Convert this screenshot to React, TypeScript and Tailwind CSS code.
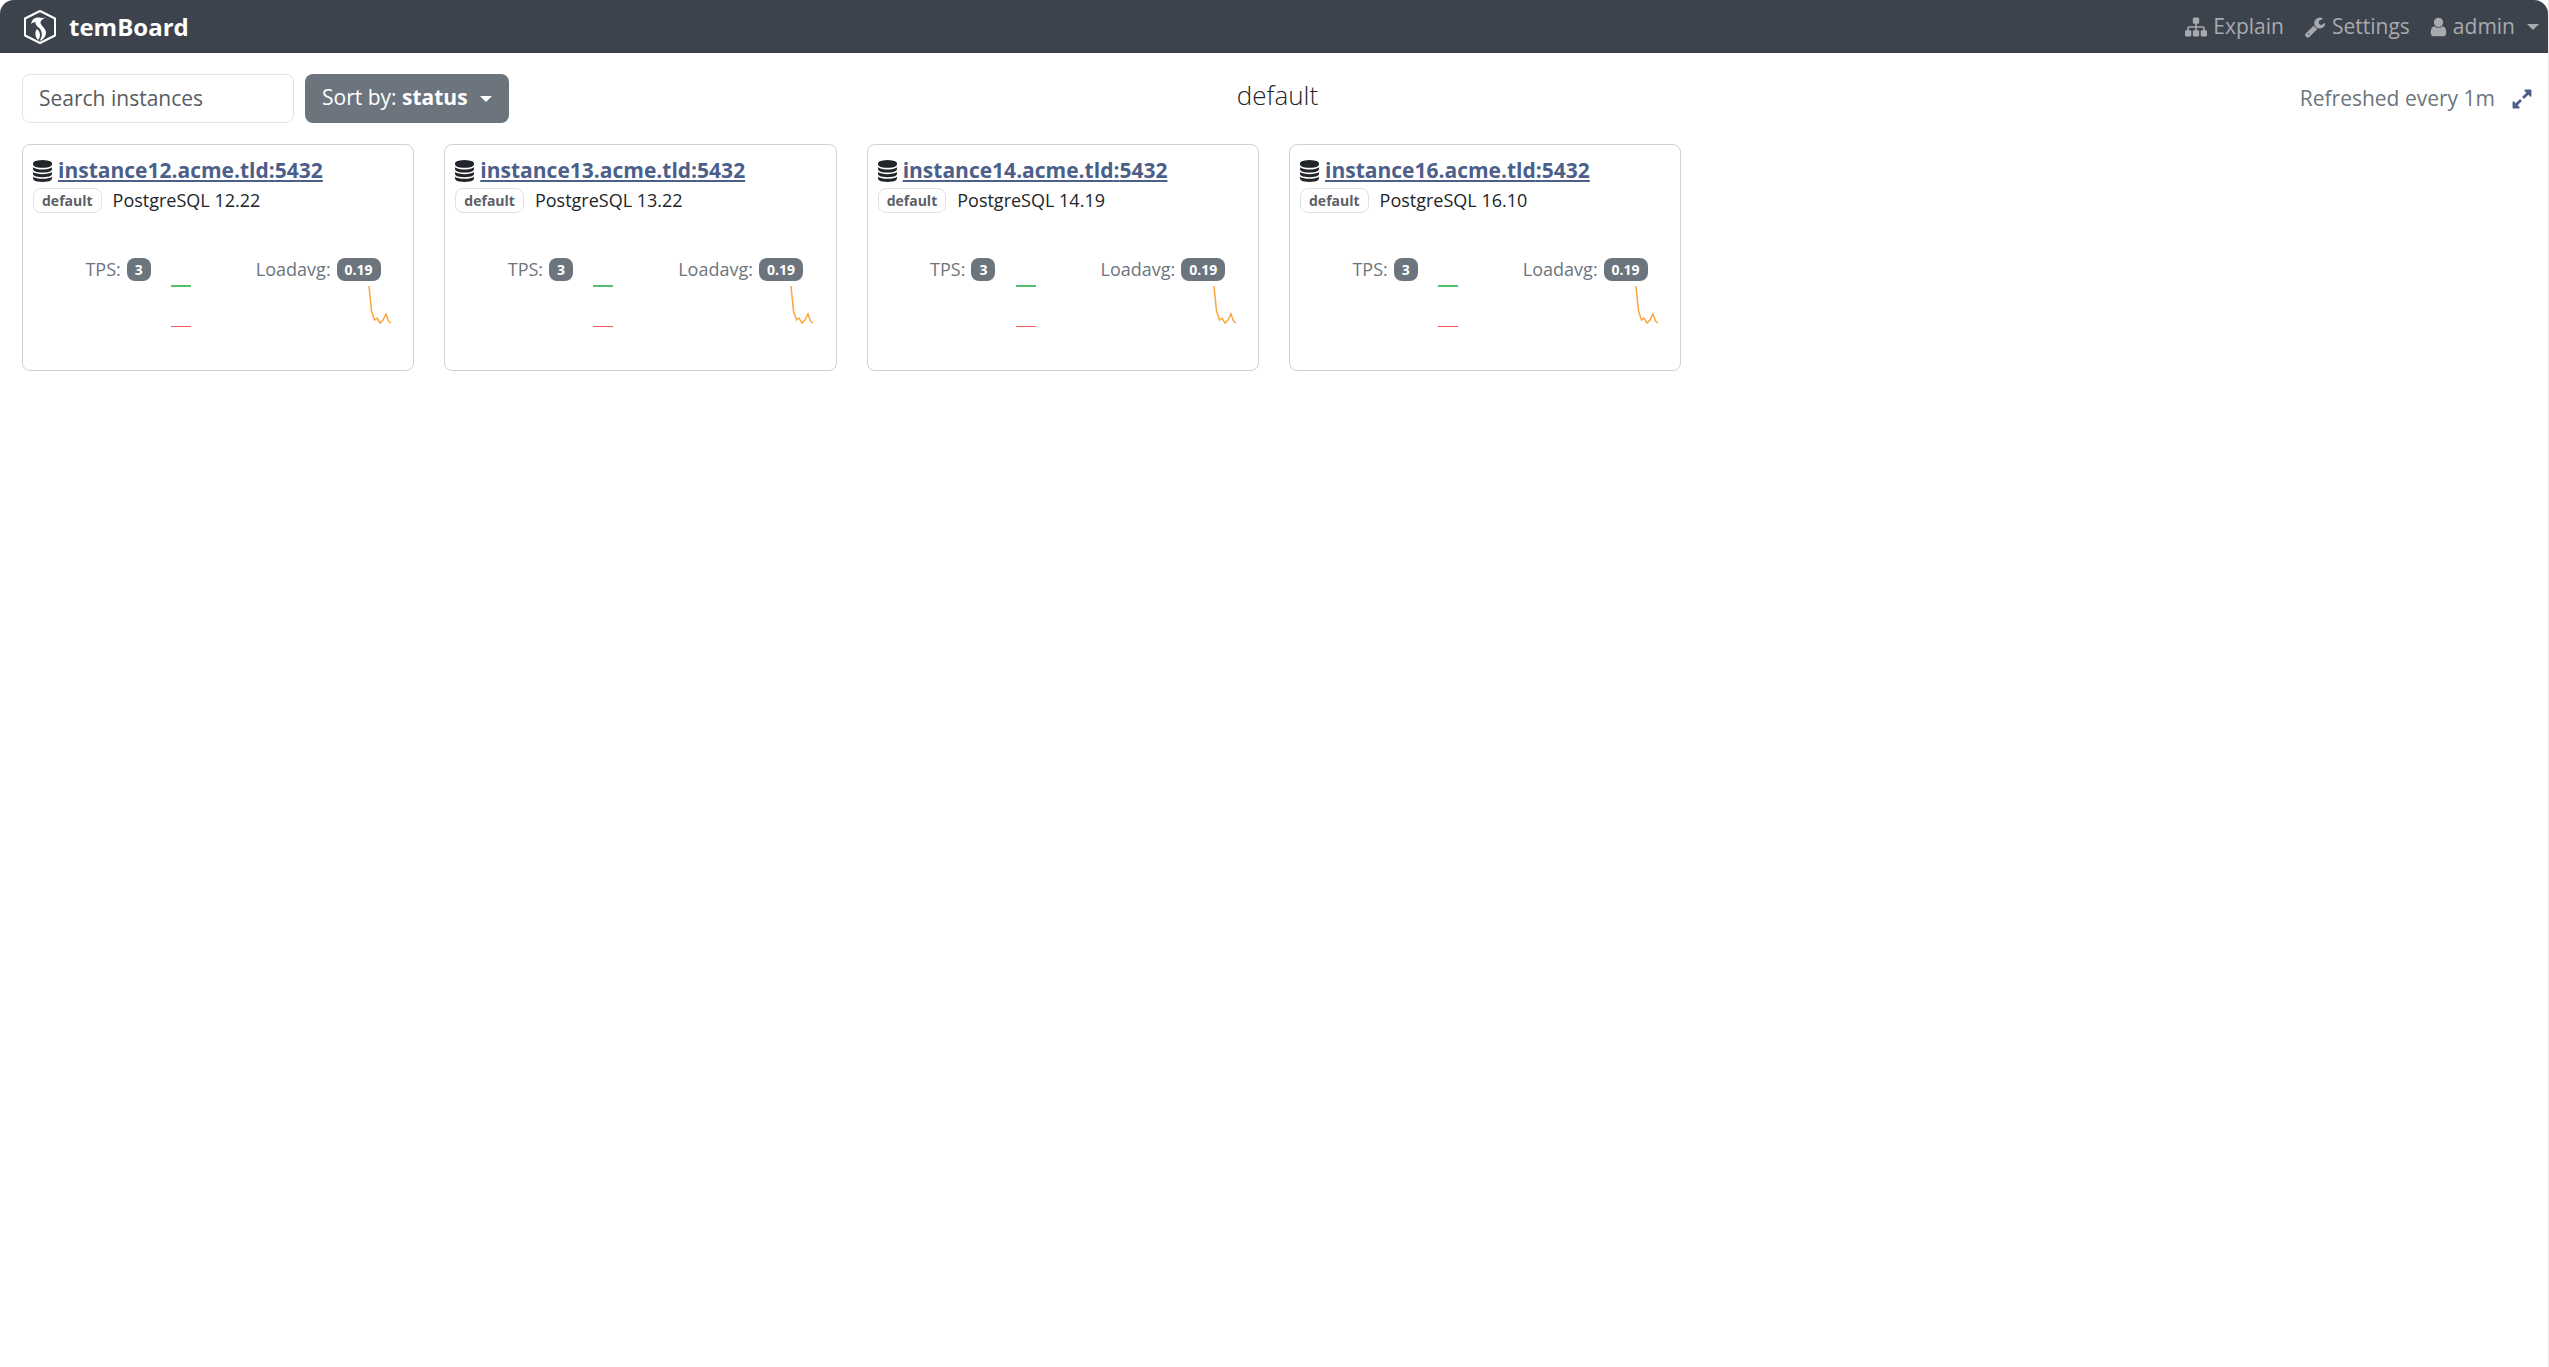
import { useState } from "react";

type Instance = {
  host: string;
  port: number;
  group: string;
  version: string;
  tps: number;
  loadavg: number;
};

const INSTANCES: Instance[] = [
  { host: "instance12.acme.tld", port: 5432, group: "default", version: "12.22", tps: 3, loadavg: 0.19 },
  { host: "instance13.acme.tld", port: 5432, group: "default", version: "13.22", tps: 3, loadavg: 0.19 },
  { host: "instance14.acme.tld", port: 5432, group: "default", version: "14.19", tps: 3, loadavg: 0.19 },
  { host: "instance16.acme.tld", port: 5432, group: "default", version: "16.10", tps: 3, loadavg: 0.19 },
];

const ICONS = {
  sitemap:
    "M1792 1248v320q0 40-28 68t-68 28h-320q-40 0-68-28t-28-68v-320q0-40 28-68t68-28h96v-192h-512v192h96q40 0 68 28t28 68v320q0 40-28 68t-68 28h-320q-40 0-68-28t-28-68v-320q0-40 28-68t68-28h96v-192h-512v192h96q40 0 68 28t28 68v320q0 40-28 68t-68 28h-320q-40 0-68-28t-28-68v-320q0-40 28-68t68-28h96v-192q0-52 38-90t90-38h512v-192h-96q-40 0-68-28t-28-68v-320q0-40 28-68t68-28h320q40 0 68 28t28 68v320q0 40-28 68t-68 28h-96v192h512q52 0 90 38t38 90v192h96q40 0 68 28t28 68z",
  wrench:
    "M448 1472q0-26-19-45t-45-19-45 19-19 45 19 45 45 19 45-19 19-45zm644-420l-682 682q-37 37-90 37-52 0-91-37l-106-108q-38-36-38-90 0-53 38-91l681-681q39 98 114.5 173.5t173.5 114.5zm634-435q0 39-23 106-47 134-164.5 217.5t-258.5 83.5q-185 0-316.5-131.5t-131.5-316.5 131.5-316.5 316.5-131.5q58 0 121.5 16.5t107.5 46.5q16 11 16 28t-16 28l-293 169v224l193 107q5-3 79-48.5t135.5-81 70.5-35.5q15 0 23.5 10t8.5 25z",
  user: "M1536 1399q0 109-62.5 187t-150.5 78h-854q-88 0-150.5-78t-62.5-187q0-85 8.5-160.5t31.5-152 58.5-131 94-89 134.5-34.5q131 128 313 128t313-128q76 0 134.5 34.5t94 89 58.5 131 31.5 152 8.5 160.5zm-256-887q0 159-112.5 271.5t-271.5 112.5-271.5-112.5-112.5-271.5 112.5-271.5 271.5-112.5 271.5 112.5 112.5 271.5z",
  database:
    "M896 768q237 0 443-43t325-127v170q0 69-103 128t-280 93.5-385 34.5-385-34.5-280-93.5-103-128v-170q119 84 325 127t443 43zm0 768q237 0 443-43t325-127v170q0 69-103 128t-280 93.5-385 34.5-385-34.5-280-93.5-103-128v-170q119 84 325 127t443 43zm0-384q237 0 443-43t325-127v170q0 69-103 128t-280 93.5-385 34.5-385-34.5-280-93.5-103-128v-170q119 84 325 127t443 43zm0-1152q208 0 385 34.5t280 93.5 103 128v128q0 69-103 128t-280 93.5-385 34.5-385-34.5-280-93.5-103-128v-128q0-69 103-128t280-93.5 385-34.5z",
  expand:
    "M883 1056q0 13-10 23l-332 332 144 144q19 19 19 45t-19 45-45 19h-448q-26 0-45-19t-19-45v-448q0-26 19-45t45-19 45 19l144 144 332-332q10-10 23-10t23 10l114 114q10 10 10 23zm781-864v448q0 26-19 45t-45 19-45-19l-144-144-332 332q-10 10-23 10t-23-10l-114-114q-10-10-10-23t10-23l332-332-144-144q-19-19-19-45t19-45 45-19h448q26 0 45 19t19 45z",
};

function Icon({ name, viewBox = "0 0 1792 1792", className }: { name: keyof typeof ICONS; viewBox?: string; className?: string }) {
  return (
    <svg viewBox={viewBox} fill="currentColor" className={className} aria-hidden="true">
      <path d={ICONS[name]} />
    </svg>
  );
}

function Caret() {
  return (
    <svg viewBox="0 0 12 6" fill="currentColor" className="h-[6px] w-[12px]" aria-hidden="true">
      <path d="M0 0h12L6 6z" />
    </svg>
  );
}

function Logo() {
  return (
    <svg viewBox="0 0 34 36" className="h-[36px] w-[34px]" aria-hidden="true">
      <path d="M17 2 32 9.500V26.500L17 34 2 26.500V9.500z" fill="none" stroke="#fff" strokeWidth="2" strokeLinejoin="round" />
      <path d="M8 15C9 10 12 8 16 8.500 19 9 21 9 23 8.500 20 10 18 11 17.500 13 17 16 22.500 19 23 23 23 28 20 30.500 16.500 32 19 28 19.500 25 18 21.500 16.500 18 12.500 17.500 12.500 13.500 11 13 9.500 14 8 15z" fill="#fff" />
      <path d="M14 20C11.500 23 12 28 15 31 18 28 17.500 23 14 20z" fill="#fff" />
    </svg>
  );
}

function Metric({ label, value }: { label: string; value: number }) {
  return (
    <div className="flex h-[27px] items-center justify-center gap-[6px]">
      {label}:
      <span className="flex h-[23px] items-center rounded-lg bg-[#6c757d] px-[8px] text-[14px] font-bold text-white">{value}</span>
    </div>
  );
}

function InstanceCard({ instance }: { instance: Instance }) {
  return (
    <div className="rounded-lg border border-[#d0d1d3] bg-white px-[10px] pt-[10px] pb-[37px] text-[#212529]">
      <div className="flex h-[32px] items-center gap-[6px]">
        <Icon name="database" viewBox="128 0 1536 1792" className="h-[22px] w-[19px]" />
        <a href="#" className="text-[21px] font-bold text-[#4c5f8a] underline decoration-2 underline-offset-2">
          {instance.host}:{instance.port}
        </a>
      </div>
      <div className="flex items-end gap-[11px]">
        <span className="flex h-[25px] items-center rounded-lg border border-[#dee2e6] px-[8px] text-[14px] font-bold text-[#5c6066]">
          {instance.group}
        </span>
        <span className="text-[18px] leading-[26px]">PostgreSQL {instance.version}</span>
      </div>
      <div className="-mx-[15px] mt-[43px] grid grid-cols-2 text-[18px] text-[#6c757d]">
        <div>
          <Metric label="TPS" value={instance.tps} />
          <svg viewBox="0 0 180 50" className="h-[50px] w-[180px]" fill="none">
            <path d="M153 3h20" stroke="#55bf6c" strokeWidth="2" />
            <path d="M153 43.500h20" stroke="#f4595c" />
          </svg>
        </div>
        <div>
          <Metric label="Loadavg" value={instance.loadavg} />
          <svg viewBox="0 0 180 50" className="h-[50px] w-[180px]" fill="none" stroke="#fca63f" strokeWidth="1.5">
            <path d="M151 3 153.500 28 156.500 37 159 35 162 40 165 37 168 31 170.500 38 173 40" />
          </svg>
        </div>
      </div>
    </div>
  );
}

export default function App() {
  const [search, setSearch] = useState("");

  const visible = INSTANCES.filter((i) => i.host.includes(search.trim()));

  return (
    <div className="min-h-screen border-r border-[#e8e8e8] bg-white font-['Open_Sans','Noto_Sans',sans-serif] text-[21px] text-[#212529]">
      <nav className="flex h-[53px] items-center justify-between rounded-t-[14px] bg-[#3d434d] pr-[9px] pl-[23px]">
        <a href="#" className="flex items-center gap-[12px] text-[24px] font-bold text-white">
          <Logo />
          temBoard
        </a>
        <div className="flex items-center gap-[20px] text-[#a7aaae]">
          <a href="#" className="flex items-center gap-[6px]">
            <Icon name="sitemap" className="size-[22px]" />
            Explain
          </a>
          <a href="#" className="flex items-center gap-[6px]">
            <Icon name="wrench" className="size-[22px]" />
            Settings
          </a>
          <button type="button" className="flex items-center gap-[12px]">
            <span className="flex items-center gap-[6px]">
              <Icon name="user" viewBox="192 0 1408 1792" className="h-[22px] w-[17px]" />
              admin
            </span>
            <Caret />
          </button>
        </div>
      </nav>

      <main className="pt-[21px]">
        <div className="grid grid-cols-[1fr_auto_1fr] pr-[15px] pl-[22px]">
          <div className="flex gap-[11px]">
            <input
              type="text"
              aria-label="Search instances"
              value={search}
              onChange={(e) => setSearch(e.target.value)}
              placeholder="Search instances"
              className="h-[49px] w-[272px] rounded-lg border border-[#dee2e6] px-[16px] pb-[2px] placeholder:text-[#595c5f]"
            />
            <button type="button" className="flex h-[49px] items-center gap-[12px] rounded-lg bg-[#6c757d] px-[17px] text-white">
              <span className="pb-[2px]">
                Sort by: <strong className="font-bold">status</strong>
              </span>
              <Caret />
            </button>
          </div>
          <h1 className="text-center text-[26px] leading-[42px] font-light">default</h1>
          <div className="flex items-center justify-end gap-[16px] text-[#6c757d]">
            Refreshed every 1m
            <button type="button" aria-label="Fullscreen" className="text-[#4c5f8a]">
              <Icon name="expand" className="size-[22px]" />
            </button>
          </div>
        </div>

        <div className="mt-[21px] grid grid-cols-6 gap-[30px] px-[22px]">
          {visible.map((i) => (
            <InstanceCard key={i.host} instance={i} />
          ))}
        </div>
      </main>
    </div>
  );
}
